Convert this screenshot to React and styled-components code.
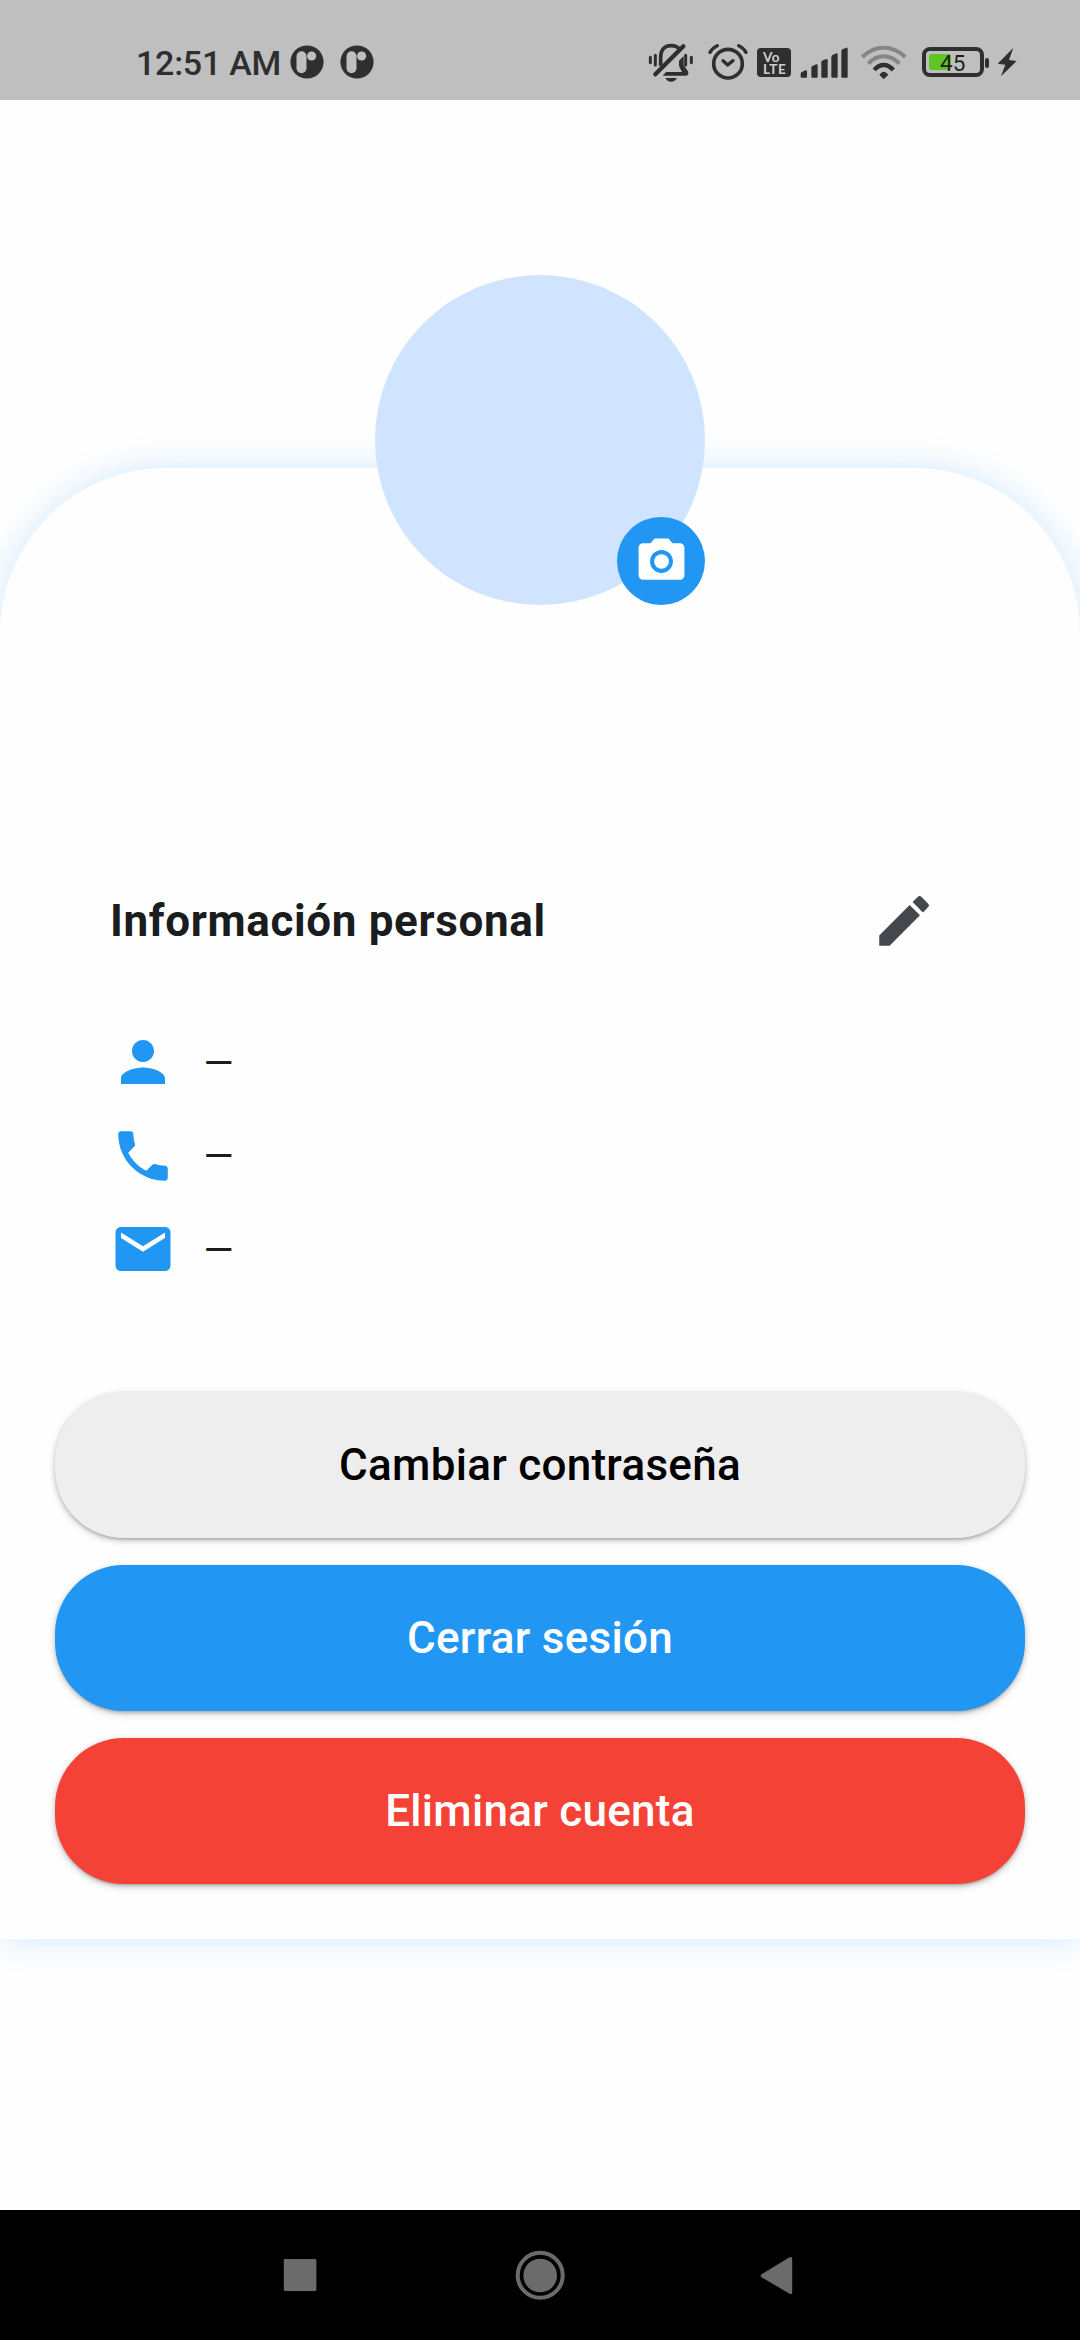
import React from "react";
import styled, { createGlobalStyle } from "styled-components";
import { MdCameraAlt, MdEdit, MdEmail, MdPerson, MdPhone } from "react-icons/md";

const INK = "#2f2f2f";

const GlobalStyle = createGlobalStyle`
  * { box-sizing: border-box; }
  html, body { margin: 0; padding: 0; background: #fefefe; }
  body { font-family: Roboto, "Noto Sans", sans-serif; }
  svg { display: block; flex: none; }
`;

const Screen = styled.div`
  width: 1080px;
  height: 2340px;
  display: flex;
  flex-direction: column;
  overflow: hidden;
  background: #fefefe;
`;

const StatusBar = styled.header`
  height: 100px;
  flex: none;
  display: flex;
  align-items: flex-start;
  justify-content: space-between;
  padding: 42px 63px 0 136px;
  background: #bfbfbf;
  color: ${INK};
`;

const StatusGroup = styled.div`
  display: flex;
  align-items: center;
  height: 42px;
  gap: ${(p) => p.$gap || 0}px;
`;

const NotificationIcons = styled(StatusGroup)`
  height: 40px;
  align-self: flex-start;
`;

const Clock = styled.span`
  width: 154px;
  font-size: 34px;
  line-height: 42px;
  font-weight: 500;
  letter-spacing: -0.25px;
  white-space: nowrap;
`;

const Volte = styled.div`
  display: flex;
  flex-direction: column;
  justify-content: center;
  width: 34px;
  height: 29px;
  margin: 0 9px 1px 9.5px;
  padding-left: 6px;
  border-radius: 4px;
  background: ${INK};
  color: #d0d0d0;
  font: 700 13.5px/12px Lato, sans-serif;
  letter-spacing: 0.5px;
`;

const Battery = styled.div`
  display: flex;
  align-items: center;
  width: 62px;
  height: 30px;
  margin: 0 0 2px 15px;
  padding: 3px;
  border: 4px solid ${INK};
  border-radius: 8px;
`;

const Charge = styled.div`
  display: flex;
  align-items: flex-start;
  width: 22px;
  height: 16px;
  padding-left: 11px;
  border-radius: 2px;
  background: #60c425;
  font-size: 22.5px;
  line-height: 19px;
  color: #1f1f1f;
`;

const BatteryTip = styled.div`
  width: 4px;
  height: 10px;
  margin: 0 8px 1px 1px;
  border-radius: 2px;
  background: ${INK};
`;

const Page = styled.main`
  flex: 1;
  display: flex;
  flex-direction: column;
  align-items: center;
  padding-top: 175px;
`;

const Avatar = styled.div`
  position: relative;
  z-index: 1;
  flex: none;
  display: flex;
  align-items: flex-end;
  justify-content: flex-end;
  width: 330px;
  height: 330px;
  margin-bottom: -137.5px;
  border-radius: 50%;
  background: #d1e4ff;
`;

const CameraButton = styled.button`
  display: flex;
  align-items: center;
  justify-content: center;
  width: 88px;
  height: 88px;
  padding: 0;
  border: 0;
  border-radius: 50%;
  background: #2196f3;
  color: #fff;
`;

const Card = styled.section`
  width: 1080px;
  height: 1471.5px;
  flex: none;
  display: flex;
  flex-direction: column;
  padding: 387.5px 55px 55px;
  border-radius: 165px 165px 0 0;
  background: #fefefe;
  box-shadow: 0 0 34px rgba(33, 150, 243, 0.2);
`;

const Info = styled.div`
  display: flex;
  flex-direction: column;
  padding: 0 55px;
`;

const InfoHeader = styled.div`
  display: flex;
  align-items: center;
  justify-content: space-between;
  height: 132px;
  margin-bottom: 42px;
`;

const Title = styled.h1`
  margin: 0;
  font-size: 44px;
  line-height: 64px;
  font-weight: 700;
  letter-spacing: 0.65px;
  color: #1a1c1e;
`;

const EditButton = styled.button`
  display: flex;
  align-items: center;
  justify-content: center;
  width: 132px;
  height: 132px;
  padding: 0;
  border: 0;
  background: none;
  color: #43474e;
`;

const InfoRow = styled.div`
  display: flex;
  align-items: center;
  gap: 27.5px;
  height: 66px;
  margin-bottom: 27.5px;
  font-size: 38.5px;
  color: #1a1c1e;

  svg { color: #2196f3; }
`;

const Actions = styled.div`
  display: flex;
  flex-direction: column;
  gap: 27.5px;
  margin-top: auto;
`;

const ActionButton = styled.button`
  height: 145.75px;
  padding: 0;
  border: 0;
  border-radius: 68.75px;
  background: ${(p) => p.$bg};
  color: ${(p) => p.$fg || "#fff"};
  font: 500 44px/64px Roboto, sans-serif;
  letter-spacing: 0.275px;
  box-shadow:
    0 3px 3px -2px rgba(0, 0, 0, 0.16),
    0 2px 5px rgba(0, 0, 0, 0.2),
    0 3px 10px rgba(0, 0, 0, 0.1);
`;

const NavBar = styled.nav`
  height: 130px;
  flex: none;
  display: flex;
  align-items: center;
  justify-content: space-between;
  padding: 0 275px;
  background: #000;
`;

const PIcon = () => (
  <svg width="34" height="34" viewBox="0 0 34 34">
    <circle cx="17" cy="17" r="16.6" fill={INK} />
    <rect x="6.5" y="6.2" width="10" height="22" rx="5" fill="#bfbfbf" />
    <circle cx="21.6" cy="11" r="4.6" fill="#bfbfbf" />
  </svg>
);

const BellIcon = () => (
  <svg width="46" height="42" viewBox="24 36 138 126" fill="none" stroke={INK} strokeWidth="9" strokeLinecap="round">
    <path d="M31 82V98M46 76V105M137 76V105M154 82V98" />
    <path d="M62 107V81C62 59 75 47 93 47C106 47 115 52 120 59" strokeWidth="11" strokeLinecap="butt" />
    <path d="M131 78V105L144 124Q148 137 138 137H68L78 126H126L117 108V92Z" fill={INK} stroke="none" />
    <path d="M46 133L130 49" strokeWidth="13" />
    <path d="M76 144H111Q105 155 93 155Q81 155 76 144Z" fill={INK} stroke="none" />
  </svg>
);

const AlarmIcon = () => (
  <svg width="40" height="42" viewBox="203 36 120 126" fill="none" stroke={INK} strokeLinecap="round" strokeLinejoin="round">
    <circle cx="263" cy="101" r="43" strokeWidth="11" />
    <path d="M209 67Q217 53 231 47M317 67Q309 53 295 47" strokeWidth="10" />
    <path d="M248 92L262 105L278 92" strokeWidth="10" />
  </svg>
);

const SIGNAL_BARS = [[482, 121], [514, 103], [544, 87], [574, 70], [604, 53]];

const SignalIcon = () => (
  <svg width="48" height="42" viewBox="480 36 144 126" fill={INK}>
    {SIGNAL_BARS.map(([x, y]) => (
      <path key={x} d={`M${x} ${y + 10}Q${x} ${y + 6} ${x + 5} ${y + 4}L${x + 15} ${y}Q${x + 19} ${y - 1} ${x + 19} ${y + 3}V140Q${x + 19} 143 ${x + 16} 143H${x + 3}Q${x} 143 ${x} 140Z`} />
    ))}
  </svg>
);

const WifiIcon = () => (
  <svg width="47" height="42" viewBox="60 36 141 126" fill="none" strokeWidth="12">
    <path d="M67 81Q95 53 131 53T196 81M85 101Q105 79 131 79T178 101" stroke="#868686" />
    <path d="M103 120Q115 105 131 105T160 120" stroke={INK} strokeWidth="13" />
    <path d="M118 134Q131 117 145 134L134 145Q131 148 128 145Z" fill={INK} />
  </svg>
);

const BoltIcon = () => (
  <svg width="20" height="42" viewBox="472 36 60 126" fill={INK}>
    <path d="M521 53L474 101L497 104L484 139L531 93L508 90Z" />
  </svg>
);

const RecentsIcon = () => (
  <svg width="50" height="50" viewBox="0 0 50 50" fill="#6b6b6b">
    <rect x="8.8" y="9" width="32.6" height="32" rx="1.5" />
  </svg>
);

const HomeIcon = () => (
  <svg width="50" height="50" viewBox="0 0 50 50" fill="#6b6b6b">
    <circle cx="25.2" cy="25.3" r="22.5" fill="none" stroke="#6b6b6b" strokeWidth="4" />
    <circle cx="25.2" cy="25.5" r="16.8" />
  </svg>
);

const BackIcon = () => (
  <svg width="50" height="50" viewBox="0 0 50 50" fill="#6b6b6b">
    <path d="M6.6 24.2L34.5 7.3Q37.2 6.2 37.2 9V42.5Q37.2 44.8 34.5 43.7L6.6 27.2Q4.6 25.7 6.6 24.2Z" />
  </svg>
);

const rows = [
  { id: "name", Icon: MdPerson },
  { id: "phone", Icon: MdPhone },
  { id: "email", Icon: MdEmail },
];

export default function App() {
  return (
    <>
      <GlobalStyle />
      <Screen>
        <StatusBar>
          <StatusGroup>
            <Clock>12:51 AM</Clock>
            <NotificationIcons $gap={16}>
              <PIcon />
              <PIcon />
            </NotificationIcons>
          </StatusGroup>
          <StatusGroup>
            <StatusGroup $gap={13.5}>
              <BellIcon />
              <AlarmIcon />
            </StatusGroup>
            <Volte>
              <span>Vo</span>
              <span>LTE</span>
            </Volte>
            <StatusGroup $gap={12}>
              <SignalIcon />
              <WifiIcon />
            </StatusGroup>
            <Battery>
              <Charge>45</Charge>
            </Battery>
            <BatteryTip />
            <BoltIcon />
          </StatusGroup>
        </StatusBar>
        <Page>
          <Avatar>
            <CameraButton>
              <MdCameraAlt size={55} />
            </CameraButton>
          </Avatar>
          <Card>
            <Info>
              <InfoHeader>
                <Title>Información personal</Title>
                <EditButton>
                  <MdEdit size={66} />
                </EditButton>
              </InfoHeader>
              {rows.map(({ id, Icon }) => (
                <InfoRow key={id}>
                  <Icon size={66} />
                  <span>—</span>
                </InfoRow>
              ))}
            </Info>
            <Actions>
              <ActionButton $bg="#eeeeee" $fg="#000">Cambiar contraseña</ActionButton>
              <ActionButton $bg="#2196f3">Cerrar sesión</ActionButton>
              <ActionButton $bg="#f44336">Eliminar cuenta</ActionButton>
            </Actions>
          </Card>
        </Page>
        <NavBar>
          <RecentsIcon />
          <HomeIcon />
          <BackIcon />
        </NavBar>
      </Screen>
    </>
  );
}
